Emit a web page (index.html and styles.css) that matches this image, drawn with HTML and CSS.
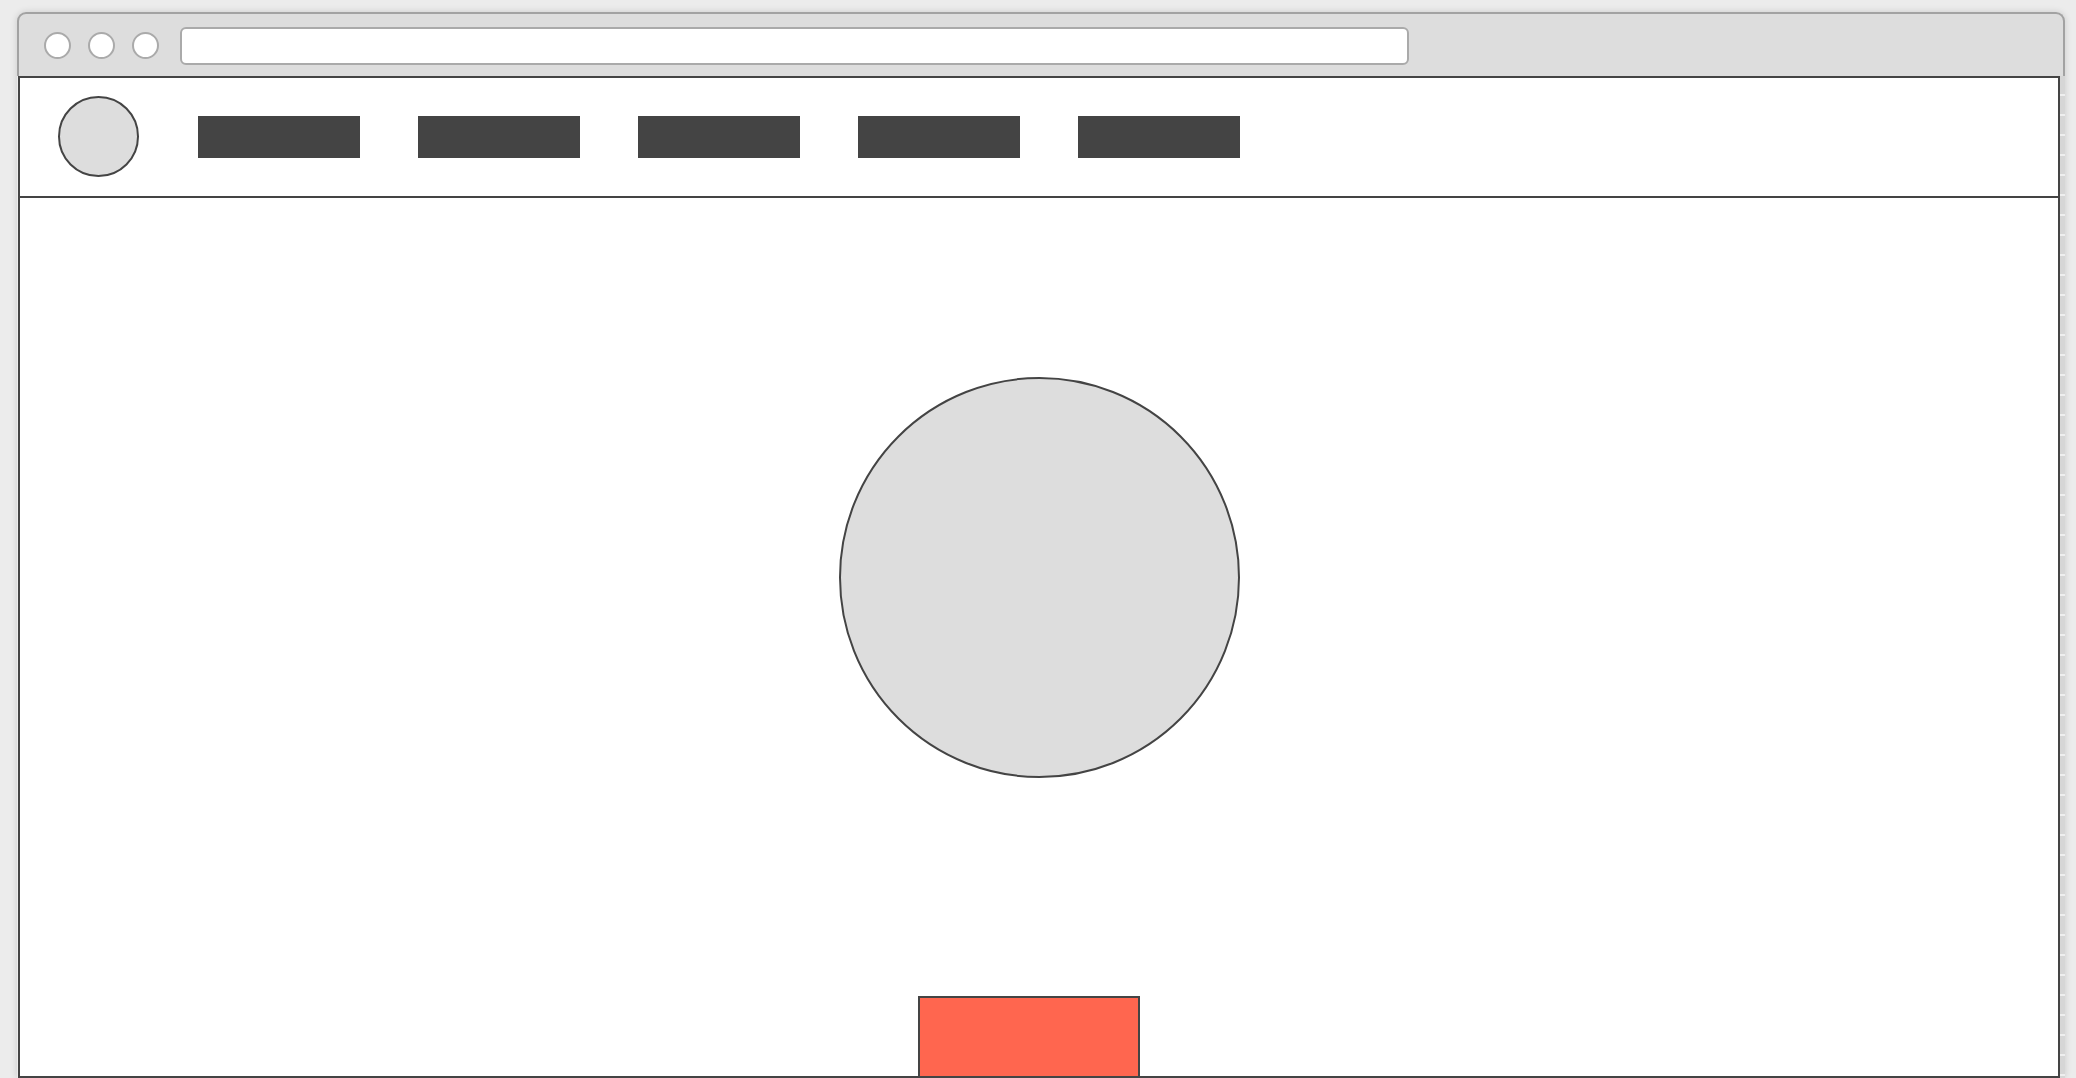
FILE: index.html
```html
<!DOCTYPE html>
<html>
<head>
<meta charset="utf-8">
<title>Wireframe</title>
<link rel="stylesheet" href="styles.css">
</head>
<body>
<div class="window">
  <div class="chrome">
    <span class="dot"></span>
    <span class="dot"></span>
    <span class="dot"></span>
    <div class="address"></div>
  </div>
  <div class="body-row">
    <div class="page">
      <header class="nav">
        <div class="logo"></div>
        <div class="nav-item"></div>
        <div class="nav-item"></div>
        <div class="nav-item"></div>
        <div class="nav-item"></div>
        <div class="nav-item"></div>
      </header>
      <main class="main">
        <div class="hero-circle"></div>
        <div class="cta"></div>
      </main>
    </div>
    <div class="side-strip"></div>
  </div>
</div>
</body>
</html>
```

FILE: styles.css
```css
html, body {
  margin: 0;
  padding: 0;
}
body {
  background: #ececec;
  width: 2076px;
  height: 1078px;
  overflow: hidden;
  font-family: "Liberation Sans", Arial, sans-serif;
}
.window {
  margin: 12px 0 0 17px;
  width: 2048px;
  box-shadow: 0 0 7px rgba(0, 0, 0, 0.14);
  border-radius: 9px 9px 0 0;
}
.chrome {
  box-sizing: border-box;
  height: 64px;
  background: #dddddd;
  border: 2px solid #a2a2a2;
  border-bottom: none;
  border-radius: 9px 9px 0 0;
  display: flex;
  align-items: center;
  padding: 0 0 0 25px;
}
.dot {
  box-sizing: border-box;
  width: 27px;
  height: 27px;
  border-radius: 50%;
  background: #ffffff;
  border: 2px solid #aaaaaa;
  margin-right: 17px;
  flex: none;
}
.dot:nth-child(3) {
  margin-right: 21px;
}
.address {
  box-sizing: border-box;
  width: 1229px;
  height: 38px;
  margin-top: 1px;
  background: #ffffff;
  border: 2px solid #aaaaaa;
  border-radius: 6px;
}
.body-row {
  display: flex;
}
.page {
  box-sizing: border-box;
  width: 2042px;
  height: 1002px;
  margin-left: 1px;
  border: 2px solid #444444;
  background: #ffffff;
  display: flex;
  flex-direction: column;
}
.side-strip {
  width: 5px;
  background: repeating-linear-gradient(to bottom, #d6d6d6 0, #d6d6d6 18px, #efefef 18px, #efefef 20px);
}
.nav {
  box-sizing: border-box;
  height: 120px;
  border-bottom: 2px solid #444444;
  display: flex;
  align-items: center;
  padding-left: 38px;
  gap: 58px;
  flex: none;
}
.logo {
  box-sizing: border-box;
  width: 81px;
  height: 81px;
  border-radius: 50%;
  background: #dddddd;
  border: 2px solid #444444;
  margin-right: 1px;
  margin-top: -1px;
}
.nav-item {
  width: 162px;
  height: 42px;
  background: #444444;
}
.main {
  flex: 1;
  display: flex;
  flex-direction: column;
  align-items: center;
}
.hero-circle {
  box-sizing: border-box;
  width: 401px;
  height: 401px;
  margin-top: 179px;
  border-radius: 50%;
  background: #dddddd;
  border: 2px solid #444444;
}
.cta {
  box-sizing: border-box;
  width: 222px;
  height: 82px;
  margin-top: auto;
  margin-right: 21px;
  margin-bottom: -2px;
  background: #ff664f;
  border: 2px solid #444444;
}
```
